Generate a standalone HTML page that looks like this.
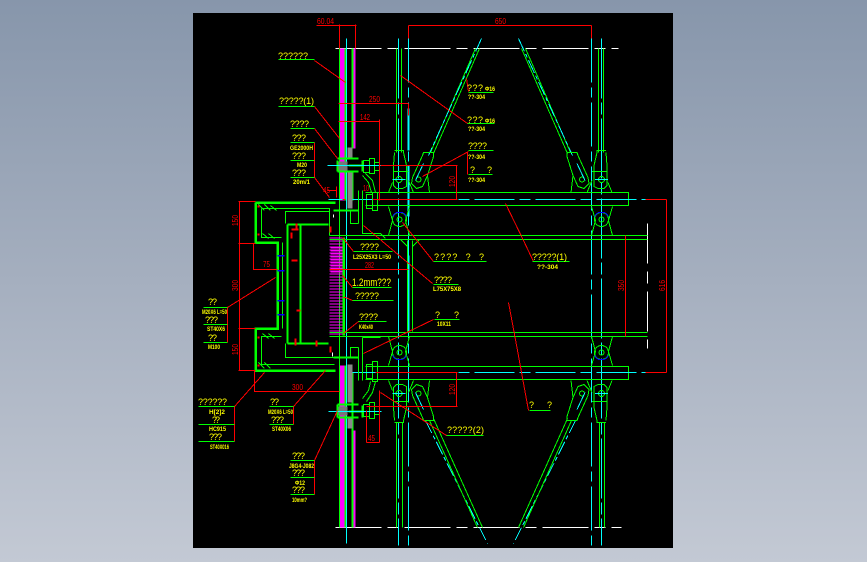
<!DOCTYPE html>
<html><head><meta charset="utf-8"><style>
html,body{margin:0;padding:0;width:867px;height:562px;overflow:hidden;background:linear-gradient(180deg,#8796ab 0%,#a5afbf 50%,#c3c9d4 100%)}
svg{position:absolute;left:0;top:0}
path,circle{fill:none;shape-rendering:crispEdges}
rect{shape-rendering:crispEdges}
.g{stroke:#0f0}.r{stroke:#f00}.c{stroke:#0ff}.m{stroke:#f0f}.w{stroke:#fff}.b{stroke:#00f}
text{font-family:"Liberation Sans",sans-serif;stroke:none}
.y{fill:#ff0;font-size:9px}
.t{fill:#ff0;font-size:6.5px;font-weight:bold}
.d{fill:#f00;font-size:8px}
</style></head><body>
<svg width="867" height="562" viewBox="0 0 867 562" xmlns="http://www.w3.org/2000/svg">
<defs>
<pattern id="hat" width="13" height="3" patternUnits="userSpaceOnUse"><rect width="13" height="1" fill="#f0f"/></pattern>
<g id="head">
<path class="g" d="M394 150H403V152L406 165V186L402 188H396L393 185V165L394 152M393 171H408M388 192L392 182M408 180L413 192"/>
<circle class="g" cx="398.5" cy="179" r="3"/>
<path class="g" d="M423 152L433 152L433 156L427 175L422 186L416 188L411 183L412 177L422 155ZM427 175L429 192"/>
<circle class="g" cx="418" cy="179" r="2.500"/>
<path class="c" d="M423 163L415 180M392 179H405"/>
</g>
<g id="mid">
<path class="g" d="M388 206L392 220L388 235M409 206L405 220L409 235"/>
<circle class="g" cx="399" cy="219" r="7"/><circle class="g" cx="399" cy="219" r="2.500"/>
<path class="b" d="M392 216Q395 211 399 212M399 212Q403 211 406 216"/>
</g>
</defs>
<rect x="193" y="13" width="480" height="535" fill="#000"/>
<g transform="translate(.5 .5)">
<!-- centre and datum lines -->
<path class="w" stroke-dasharray="46 6 11 6" d="M335 48H618"/>
<path class="w" stroke-dasharray="46 6 11 6" d="M335 527H621"/>
<path class="w" stroke-dasharray="40 8 12 8" d="M647 223V348"/>
<path class="c" stroke-dasharray="60 4 12 4" d="M398 38V545"/>
<path class="c" stroke-dasharray="44 5 10 5" d="M408 38V545"/>
<path class="c" stroke-dasharray="44 5 10 5" d="M591 38V545"/>
<path class="c" stroke-dasharray="60 4 12 4" d="M601 38V545"/>
<path class="c" stroke-width="2" d="M408 108V150M408 165V216M408 255V330"/>
<!-- glass wall -->
<path class="g" d="M339 48V527"/>
<path class="m" stroke-width="5" d="M342 48V200M342 365V527"/>
<path class="g" stroke-width="2" d="M345 48V200M345 365V527"/>
<path class="c" d="M346 38V543"/>
<path class="g" stroke-width="2" d="M352 48V148M352 172V200M352 372V420M352 420V527"/>
<path class="m" stroke-width="2" d="M354 48V148M354 430V527"/>
<!-- upper node -->
<rect x="347" y="147" width="5" height="10" fill="#888"/><rect x="347" y="172" width="5" height="36" fill="#888"/>
<rect x="347" y="364" width="5" height="38" fill="#888"/><rect x="347" y="418" width="5" height="10" fill="#888"/>
<rect x="338" y="161" width="9" height="9" fill="#777"/><rect x="338" y="406" width="9" height="9" fill="#777"/>
<path class="g" stroke-width="2" d="M337 158H358M337 171H358M337 160V171M337 404H358M337 417H358M337 404V417"/>
<path class="g" stroke-width="2" d="M348 165H362M362 160V171M348 411H362M362 405V417"/>
<path class="g" d="M363 160H369V172H363ZM369 158H374V173H369ZM374 162H379V170H374M363 404H369V416H363ZM369 402H374V418H369ZM374 406H379V414H374"/>
<path class="g" d="M365 173L372 180L375 192M362 175L368 182L371 192M366 401L372 392L375 381M362 398L368 390L370 381"/>
<path class="c" d="M327 165H380M328 411H381M328 199H345"/>
<!-- beams -->
<path class="g" d="M365 192H628V205H365M365 366H628V379H365"/>
<path class="g" d="M366 194H372V208H366ZM372 192H377V210H372ZM366 364H372V378H366ZM372 361H377V381H372Z"/>
<path class="c" stroke-dasharray="40 5 11 5" d="M352 199H645M352 372H645"/>
<path class="g" d="M329 235H647M329 239H647M329 332H647M329 336H647"/>
<!-- steel tube -->
<path class="g" stroke-width="2.500" d="M255 202H335M255 202V242H277V328H255V370H335"/>
<path class="g" stroke-width="2" d="M287 224V343M300 224V343M287 224H328M287 343H328"/>
<path class="g" d="M261 208H329V235M261 208V237H281M285 223V211H329M261 364H334M261 364V336H281M285 343V357H335M282 242V328"/>
<path class="g" d="M258 204L264 210M264 204L270 210M270 205L276 210M262 233L268 238M268 233L274 238M262 333L268 338M268 333L274 338M258 362L264 368M264 362L270 368"/>
<path class="g" d="M358 190V223M362 190V233H380L385 238M358 347V380M362 337V380M362 337H380M358 223H350V210M358 347H350V357"/>
<path class="g" stroke-width="2" d="M333 210H358M333 357H358"/>
<rect x="329" y="237" width="13" height="98" fill="url(#hat)"/>
<rect x="330" y="246" width="12" height="26" y2="0" fill="url(#hat)" transform="translate(0 1)"/>
<path class="g" stroke-width="2.500" d="M343 237V335"/>
<path class="g" d="M407 240V331M412 240V331M400 239L407 246M419 239L412 246"/>
<!-- rods and diagonals -->
<path class="g" d="M396 48V152M401 48V152M598 48V152M603 48V152M396 422V527M402 422V527M599 422V527M604 422V527"/>
<path class="g" d="M475 48L430 152M479 48L433 153M525 48L570 152M521 48L567 153"/>
<path class="c" stroke-dasharray="14 3 4 3" d="M481 38L428 155M518 38L572 155M425 420L487 543M575 420L513 543"/>
<path class="g" d="M429 420L477 527M433 418L482 527M571 420L523 527M567 418L518 527"/>
<use href="#head"/><use href="#mid"/>
<use href="#head" transform="translate(999.500 0) scale(-1 1)"/><use href="#mid" transform="translate(1000 0) scale(-1 1)"/>
<use href="#head" transform="translate(0 572) scale(1 -1)"/><use href="#mid" transform="translate(0 571) scale(1 -1)"/>
<use href="#head" transform="translate(999.500 572) scale(-1 -1)"/><use href="#mid" transform="translate(1000 571) scale(-1 -1)"/>
<!-- dimensions -->
<path class="r" d="M316 25H356M339 24V48M355 24V48M338 103H408M408 103V115M338 121H379M379 119V200M380 165H457M456 165V199M372 199H457M375 372H457M456 372V406M366 406H457M366 410V442M379 390V442M366 442H379M239 201V370M238 201H255M238 243H255M238 328H255M238 370H255M253 243V269H277M254 370V391H339M329 269H408M408 25H591M408 25V38M591 25V38M625 235V336M645 199H666M666 199V372M645 372H666M342 199H345M327 190H336M336 186V197"/>
<!-- leaders -->
<path class="r" d="M314 60L345 82M314 106L339 138M314 128L337 158M314 142V177M314 177L329 197M468 91L466 78M467 123L400 75M468 151L422 176M467 151V174M353 251L342 237M352 287L342 275M352 300L345 297H343M358 321L343 333M433 261L402 222M432 283L363 225M433 319L363 353M505 203L523 240L533 261M508 302L517 350L528 410M446 435L380 392M227 307V342M227 307L275 277M234 406V441M234 406L264 372M293 406V424M293 406L325 370M314 460V494M314 460L337 410"/>
<path class="r" stroke-width="2" d="M296 223V229M291 229H298M291 232V238M291 260H297M295 338V345M316 340V346M330 346V352M330 226V232M296 310H300M258 205V207M258 233V235M258 336V338M258 364V366"/>
<path class="b" stroke-width="1.500" d="M277 255H284M277 270H284M277 300H284M277 314H284"/>
<path class="w" d="M333 214V217M332 352V356"/>
<!-- label underlines -->
<path class="g" d="M278 59H314M278 106H314M290 128H314M290 142H314M290 160H314M290 177H314M468 92H493M467 123H494M468 150H493M468 174H492M353 251H392M352 287H391M352 300H393M358 321H386M433 261H486M433 284H458M434 319H459M532 261H569M529 410H550M446 435H483M203 307H227M203 324H227M203 342H227M198 406H234M198 424H234M198 441H234M269 406H293M269 424H293M290 460H314M290 477H314M290 494H314"/>
</g>
<!-- dim text -->
<text class="d" x="317" y="24" textLength="17" lengthAdjust="spacingAndGlyphs">60.04</text>
<text class="d" x="369" y="102" textLength="11" lengthAdjust="spacingAndGlyphs">250</text>
<text class="d" x="360" y="120" textLength="10" lengthAdjust="spacingAndGlyphs">142</text>
<text class="d" x="495" y="24" textLength="11" lengthAdjust="spacingAndGlyphs">650</text>
<text class="d" x="365" y="268" textLength="9" lengthAdjust="spacingAndGlyphs">282</text>
<text class="d" x="263" y="267" textLength="7" lengthAdjust="spacingAndGlyphs">75</text>
<text class="d" x="292" y="390" textLength="11" lengthAdjust="spacingAndGlyphs">300</text>
<text class="d" x="368" y="441" textLength="7" lengthAdjust="spacingAndGlyphs">45</text>
<text class="d" x="323" y="193" textLength="7" lengthAdjust="spacingAndGlyphs">45</text>
<text class="d" x="363" y="191" textLength="6" lengthAdjust="spacingAndGlyphs">10</text>
<text class="d" transform="translate(238 226) rotate(-90)" textLength="11" lengthAdjust="spacingAndGlyphs">150</text>
<text class="d" transform="translate(238 291) rotate(-90)" textLength="11" lengthAdjust="spacingAndGlyphs">300</text>
<text class="d" transform="translate(238 355) rotate(-90)" textLength="11" lengthAdjust="spacingAndGlyphs">150</text>
<text class="d" transform="translate(455 187) rotate(-90)" textLength="11" lengthAdjust="spacingAndGlyphs">120</text>
<text class="d" transform="translate(455 395) rotate(-90)" textLength="11" lengthAdjust="spacingAndGlyphs">120</text>
<text class="d" transform="translate(624 291) rotate(-90)" textLength="11" lengthAdjust="spacingAndGlyphs">350</text>
<text class="d" transform="translate(665 291) rotate(-90)" textLength="11" lengthAdjust="spacingAndGlyphs">616</text>
<!-- labels -->
<text class="y" x="278" y="59" textLength="30">??????</text>
<text class="y" x="279" y="104" textLength="35">?????(1)</text>
<text class="y" x="290" y="127" textLength="19">????</text>
<text class="y" x="292" y="141" textLength="14">???</text>
<text class="t" x="290" y="150" textLength="23" lengthAdjust="spacingAndGlyphs">GE2000H</text>
<text class="y" x="292" y="159" textLength="14">???</text>
<text class="t" x="297" y="167" textLength="10" lengthAdjust="spacingAndGlyphs">M20</text>
<text class="y" x="292" y="176" textLength="14">???</text>
<text class="t" x="293" y="184" textLength="17" lengthAdjust="spacingAndGlyphs">20m/1</text>
<text class="y" x="467" y="91" textLength="16">???</text><text class="t" x="485" y="91" textLength="10" lengthAdjust="spacingAndGlyphs">Φ16</text>
<text class="t" x="468" y="99" textLength="17" lengthAdjust="spacingAndGlyphs">??-304</text>
<text class="y" x="467" y="123" textLength="16">???</text><text class="t" x="485" y="123" textLength="10" lengthAdjust="spacingAndGlyphs">Φ16</text>
<text class="t" x="468" y="131" textLength="17" lengthAdjust="spacingAndGlyphs">??-304</text>
<text class="y" x="468" y="149" textLength="19">????</text>
<text class="t" x="468" y="159" textLength="17" lengthAdjust="spacingAndGlyphs">??-304</text>
<text class="y" x="470" y="173" textLength="22">?&#160;&#160;&#160;&#160;?</text>
<text class="t" x="468" y="182" textLength="17" lengthAdjust="spacingAndGlyphs">??-304</text>
<text class="y" x="360" y="250" textLength="19">????</text>
<text class="t" x="353" y="259" textLength="38" lengthAdjust="spacingAndGlyphs">L25X25X3 L=50</text>
<text class="y" x="352" y="286" style="font-size:11px" textLength="39" lengthAdjust="spacingAndGlyphs">1.2mm???</text>
<text class="y" x="355" y="299" textLength="24">?????</text>
<text class="y" x="359" y="320" textLength="19">????</text>
<text class="t" x="359" y="329" textLength="14" lengthAdjust="spacingAndGlyphs">K40x40</text>
<text class="y" x="434" y="260" textLength="50">????&#160;&#160;?&#160;&#160;?</text>
<text class="y" x="434" y="283" textLength="18">????</text>
<text class="t" x="433" y="291" textLength="28" lengthAdjust="spacingAndGlyphs">L75X75X8</text>
<text class="y" x="435" y="318" textLength="24">?&#160;&#160;&#160;&#160;?</text>
<text class="t" x="437" y="326" textLength="14" lengthAdjust="spacingAndGlyphs">10X11</text>
<text class="y" x="532" y="260" textLength="35">?????(1)</text>
<text class="t" x="537" y="269" textLength="21" lengthAdjust="spacingAndGlyphs">??-304</text>
<text class="y" x="529" y="408" textLength="23">?&#160;&#160;&#160;&#160;?</text>
<text class="y" x="447" y="433" textLength="37">?????(2)</text>
<text class="y" x="208" y="305" textLength="9">??</text>
<text class="t" x="202" y="314" textLength="25" lengthAdjust="spacingAndGlyphs">M20X6 L=50</text>
<text class="y" x="205" y="323" textLength="13">???</text>
<text class="t" x="207" y="331" textLength="18" lengthAdjust="spacingAndGlyphs">ST40X6</text>
<text class="y" x="208" y="341" textLength="9">??</text>
<text class="t" x="208" y="349" textLength="12" lengthAdjust="spacingAndGlyphs">M100</text>
<text class="y" x="198" y="405" textLength="29">??????</text>
<text class="t" x="209" y="414" textLength="16" lengthAdjust="spacingAndGlyphs">H[2]2</text>
<text class="y" x="212" y="423" textLength="8">??</text>
<text class="t" x="209" y="431" textLength="17" lengthAdjust="spacingAndGlyphs">HC915</text>
<text class="y" x="209" y="440" textLength="13">???</text>
<text class="t" x="210" y="449" textLength="19" lengthAdjust="spacingAndGlyphs">ST40X016</text>
<text class="y" x="270" y="405" textLength="9">??</text>
<text class="t" x="268" y="414" textLength="25" lengthAdjust="spacingAndGlyphs">M20X6 L=50</text>
<text class="y" x="271" y="423" textLength="13">???</text>
<text class="t" x="272" y="431" textLength="19" lengthAdjust="spacingAndGlyphs">ST40X06</text>
<text class="y" x="292" y="459" textLength="13">???</text>
<text class="t" x="289" y="468" textLength="25" lengthAdjust="spacingAndGlyphs">J8G4-J082</text>
<text class="y" x="292" y="476" textLength="13">???</text>
<text class="t" x="295" y="485" textLength="10" lengthAdjust="spacingAndGlyphs">Φ12</text>
<text class="y" x="292" y="493" textLength="13">???</text>
<text class="t" x="292" y="502" textLength="15" lengthAdjust="spacingAndGlyphs">10mm?</text>
</svg>
</body></html>
